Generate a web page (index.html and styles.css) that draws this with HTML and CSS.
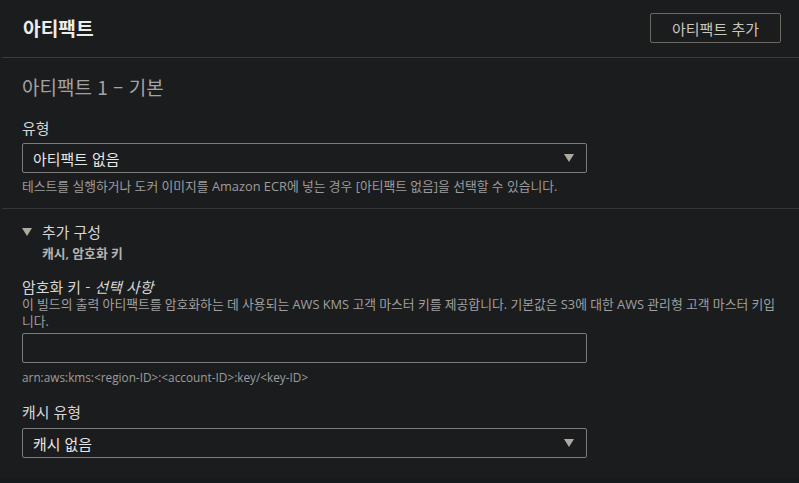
FILE: index.html
```html
<!DOCTYPE html>
<html lang="ko">
<head>
<meta charset="utf-8">
<link rel="stylesheet" href="styles.css">
</head>
<body>
<div class="panel">
  <div class="header">
    <h2 class="title">아티팩트</h2>
    <button class="btn">아티팩트 추가</button>
  </div>
  <div class="section first">
    <h3 class="subtitle">아티팩트 1 – 기본</h3>
    <div class="label">유형</div>
    <div class="select">
      <span>아티팩트 없음</span>
      <svg class="caret" width="10" height="8" viewBox="0 0 10 8"><path d="M0 0H10L5 8Z" fill="#aeaaa1"/></svg>
    </div>
    <div class="help">테스트를 실행하거나 도커 이미지를 Amazon ECR에 넣는 경우 [아티팩트 없음]을 선택할 수 있습니다.</div>
  </div>
  <div class="section second">
    <div class="expander">
      <svg class="tri" width="10" height="8" viewBox="0 0 10 8"><path d="M0 0H10L5 8Z" fill="#aeaaa1"/></svg>
      <span>추가 구성</span>
    </div>
    <div class="expander-sub">캐시, 암호화 키</div>
    <div class="label label-key">암호화 키 - <i>선택 사항</i></div>
    <div class="desc">이 빌드의 출력 아티팩트를 암호화하는 데 사용되는 AWS KMS 고객 마스터 키를 제공합니다. 기본값은 S3에 대한 AWS 관리형 고객 마스터 키입니다.</div>
    <div class="input"></div>
    <div class="help help-arn">arn:aws:kms:&lt;region-ID&gt;:&lt;account-ID&gt;:key/&lt;key-ID&gt;</div>
    <div class="label label-cache">캐시 유형</div>
    <div class="select">
      <span>캐시 없음</span>
      <svg class="caret" width="10" height="8" viewBox="0 0 10 8"><path d="M0 0H10L5 8Z" fill="#aeaaa1"/></svg>
    </div>
  </div>
  <div class="footer"></div>
</div>
</body>
</html>
```

FILE: styles.css
```css
html, body {
  margin: 0;
  padding: 0;
  background: #1b1c1e;
}
body {
  font-family: "Open Sans", "Noto Sans CJK KR", sans-serif;
  color: #d5d5d5;
  height: 483px;
  overflow: hidden;
}
.panel {
  display: flex;
  flex-direction: column;
  height: 483px;
}
.header {
  display: flex;
  justify-content: space-between;
  align-items: center;
  padding: 13px 18px 14px 21px;
  border-bottom: 1px solid #3a3b3d;
  margin-left: 2px;
}
.title {
  margin: 0;
  font-size: 19.2px;
  font-weight: 700;
  color: #ececec;
  line-height: 24px;
  font-family: "Noto Sans CJK KR", sans-serif;
}
.btn {
  height: 30px;
  width: 131px;
  background: transparent;
  border: 1px solid #6c6962;
  border-radius: 2px;
  color: #cbc6bb;
  font-family: "Noto Sans CJK KR", sans-serif;
  font-size: 15px;
  padding: 0;
}
.section {
  padding: 0 22px;
  display: flex;
  flex-direction: column;
}
.first {
  padding-top: 17px;
  padding-bottom: 14px;
  border-bottom: 1px solid #353638;
  margin-left: 2px;
  padding-left: 20px;
}
.subtitle {
  margin: 0 0 19px;
  font-size: 19px;
  font-weight: 400;
  line-height: 24px;
  color: #a3a3a3;
  font-family: "Noto Sans CJK KR", sans-serif;
}
.label {
  font-size: 14.9px;
  line-height: 20px;
  color: #d7d7d7;
  margin-bottom: 5px;
  font-family: "Noto Sans CJK KR", sans-serif;
}
.label i {
  font-style: italic;
}
.select, .input {
  box-sizing: border-box;
  width: 565px;
  height: 30px;
  border: 1px solid #7b7b7b;
  border-radius: 2px;
  display: flex;
  align-items: center;
  justify-content: space-between;
  padding: 0 12px 0 10px;
  font-size: 14.9px;
  color: #e6e6e6;
  font-family: "Noto Sans CJK KR", sans-serif;
}
.caret {
  display: block;
}
.help {
  font-size: 12.8px;
  line-height: 16px;
  color: #9d9d9d;
  margin-top: 5px;
}
.second {
  padding-top: 13px;
  flex: 1;
}
.expander {
  display: flex;
  align-items: center;
  gap: 10px;
  font-size: 14.9px;
  line-height: 20px;
  color: #d7d7d7;
  font-family: "Noto Sans CJK KR", sans-serif;
}
.expander-sub {
  margin: 3px 0 0 20px;
  font-size: 12.8px;
  line-height: 16px;
  font-weight: 600;
  color: #b4b4b4;
}
.label-key {
  margin-top: 16px;
  margin-bottom: 0;
  line-height: 19px;
}
.desc {
  font-size: 12.8px;
  line-height: 17px;
  color: #a0a0a0;
  margin-bottom: 3px;
}
.help-arn {
  margin-top: 6px;
  font-size: 11.8px;
}
.label-cache {
  margin-top: 17px;
  margin-bottom: 6px;
}
.footer {
  height: 5px;
  background: #161a1d;
}
```
